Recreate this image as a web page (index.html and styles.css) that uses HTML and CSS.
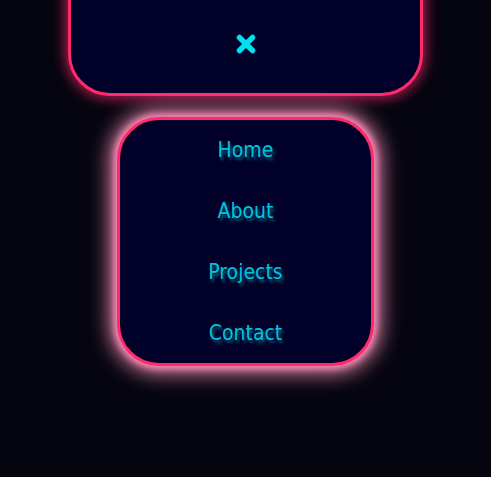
FILE: index.html
```html
<!DOCTYPE html>
<html>
<head>
<meta charset="utf-8">
<link rel="stylesheet" href="styles.css">
</head>
<body>
<div class="page">
  <div class="top-panel">
    <button class="close" aria-label="Close">
      <svg width="22" height="22" viewBox="0 0 22 22"><path d="M4.5 4.5 L17.5 17.5 M17.5 4.5 L4.5 17.5" stroke="#00e1f0" stroke-width="5.5" stroke-linecap="round"/></svg>
    </button>
  </div>
  <nav class="menu">
    <a href="#">Home</a>
    <a href="#">About</a>
    <a href="#">Projects</a>
    <a href="#">Contact</a>
  </nav>
</div>
</body>
</html>
```
FILE: styles.css
```css
html, body {
  margin: 0;
  padding: 0;
  background: #05050f;
  height: 100%;
}
.page {
  display: flex;
  flex-direction: column;
  align-items: center;
}
.top-panel {
  box-sizing: border-box;
  width: 355px;
  height: 156px;
  margin-top: -60px;
  border: 3px solid #ff2a6d;
  border-radius: 42px;
  background: #000028;
  box-shadow: 0 0 14px 2px rgba(255, 42, 109, 0.75);
  display: flex;
  justify-content: center;
  align-items: flex-end;
  padding-bottom: 38px;
}
.close {
  background: none;
  border: 0;
  padding: 0;
  width: 22px;
  height: 22px;
  display: block;
}
.close svg { display: block; }
.menu {
  box-sizing: border-box;
  margin-top: 21px;
  width: 257px;
  height: 249px;
  border: 3px solid #ff2a6d;
  border-radius: 42px;
  background: #000028;
  box-shadow: 0 0 6px 3px rgba(255, 140, 185, 0.9), 0 0 20px 8px rgba(255, 150, 190, 0.8);
  display: flex;
  flex-direction: column;
  align-items: center;
  padding-top: 18px;
  gap: 37px;
}
.menu a {
  font-family: "DejaVu Sans Condensed", "DejaVu Sans", sans-serif;
  font-size: 21px;
  line-height: 24px;
  color: #00c4dd;
  text-decoration: none;
  text-shadow: 2px 3px 3px rgba(0, 170, 200, 0.55);
}
```
